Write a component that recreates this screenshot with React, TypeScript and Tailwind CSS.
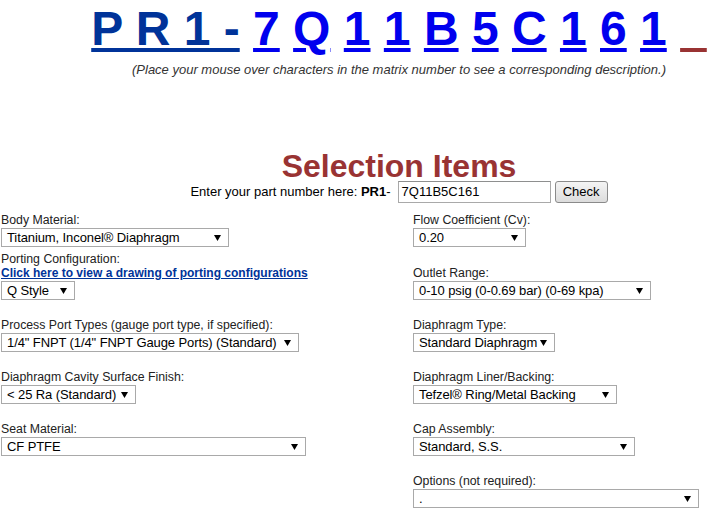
import React from "react";

function Arrow() {
  return (
    <svg width="7" height="6" viewBox="0 0 7 6" className="shrink-0 ml-[3px]">
      <polygon points="0,0 7,0 3.5,6" fill="#000" />
    </svg>
  );
}

function Sel({ value, w }: { value: string; w: string }) {
  return (
    <div
      className={`flex h-[19px] mt-[1px] items-center justify-between border border-[#a9a9a9] bg-white pl-[5px] pr-[7px] text-[13px] leading-[15px] text-black whitespace-nowrap ${w}`}
    >
      <span className="tracking-[-0.1px]">{value}</span>
      <Arrow />
    </div>
  );
}

function Label({ children }: { children: React.ReactNode }) {
  return <div className="text-[12.3px] leading-[14px] text-[#222] whitespace-nowrap">{children}</div>;
}

const chars = ["7", "Q", "1", "1", "B", "5", "C", "1", "6", "1"];

export default function App() {
  return (
    <div className="w-[713px] h-[519px] overflow-hidden bg-white font-['Liberation_Sans',Arial,sans-serif] text-black">
      <div className="pl-[85px] text-center pt-[2px]">
        <div className="text-[48px] font-bold leading-[53px] whitespace-nowrap">
          <a className="text-[#003399] underline">P R 1 -</a>{" "}
          {chars.map((c, i) => (
            <React.Fragment key={i}>
              <a className="text-[#0000ee] underline">{c}</a>{" "}
            </React.Fragment>
          ))}
          <span className="text-[#993333] underline">{"\u00a0\u00a0"}</span>
        </div>
        <div className="italic text-[13px] leading-[15px] text-[#333] mt-[7px]">
          (Place your mouse over characters in the matrix number to see a corresponding description.)
        </div>
        <div className="mt-[75px] text-[32px] leading-[29px] font-bold text-[#993333]">Selection Items</div>
        <div className="flex justify-center items-center h-[22px] text-[13px] text-black">
          <span>
            Enter your part number here: <b>PR1</b>-
          </span>
          <div className="ml-[7px] w-[153px] h-[22px] border border-[#a9a9a9] border-t-[#8e8f8f] flex items-center pl-[3px] text-left">
            7Q11B5C161
          </div>
          <div className="ml-[4px] w-[53px] h-[22px] rounded-[3px] border border-[#8a8a8a] bg-gradient-to-b from-[#f4f4f4] to-[#dcdcdc] flex items-center justify-center">
            Check
          </div>
        </div>
      </div>

      <div className="mt-[10px] flex flex-col">
        <div className="grid grid-cols-[413px_1fr] items-end">
          <div className="pl-[1px]">
            <Label>Body Material:</Label>
            <Sel value="Titanium, Inconel® Diaphragm" w="w-[228px]" />
          </div>
          <div>
            <Label>Flow Coefficient (Cv):</Label>
            <Sel value="0.20" w="w-[113px]" />
          </div>
        </div>

        <div className="grid grid-cols-[413px_1fr] items-end mt-[5px]">
          <div className="pl-[1px]">
            <Label>Porting Configuration:</Label>
            <a className="block text-[12px] leading-[14px] font-bold underline text-[#003399] whitespace-nowrap">
              Click here to view a drawing of porting configurations
            </a>
            <div className="mt-[1px]">
              <Sel value="Q Style" w="w-[74px]" />
            </div>
          </div>
          <div>
            <Label>Outlet Range:</Label>
            <div className="mt-[1px]">
              <Sel value="0-10 psig (0-0.69 bar) (0-69 kpa)" w="w-[238px]" />
            </div>
          </div>
        </div>

        <div className="grid grid-cols-[413px_1fr] items-end mt-[18px]">
          <div className="pl-[1px]">
            <Label>Process Port Types (gauge port type, if specified):</Label>
            <Sel value={'1/4" FNPT (1/4" FNPT Gauge Ports) (Standard)'} w="w-[298px]" />
          </div>
          <div>
            <Label>Diaphragm Type:</Label>
            <Sel value="Standard Diaphragm" w="w-[142px]" />
          </div>
        </div>

        <div className="grid grid-cols-[413px_1fr] items-end mt-[18px]">
          <div className="pl-[1px]">
            <Label>Diaphragm Cavity Surface Finish:</Label>
            <Sel value="< 25 Ra (Standard)" w="w-[135px]" />
          </div>
          <div>
            <Label>Diaphragm Liner/Backing:</Label>
            <Sel value="Tefzel® Ring/Metal Backing" w="w-[204px]" />
          </div>
        </div>

        <div className="grid grid-cols-[413px_1fr] items-end mt-[18px]">
          <div className="pl-[1px]">
            <Label>Seat Material:</Label>
            <Sel value="CF PTFE" w="w-[305px]" />
          </div>
          <div>
            <Label>Cap Assembly:</Label>
            <Sel value="Standard, S.S." w="w-[222px]" />
          </div>
        </div>

        <div className="grid grid-cols-[413px_1fr] items-end mt-[18px]">
          <div />
          <div>
            <Label>Options (not required):</Label>
            <Sel value="." w="w-[286px]" />
          </div>
        </div>
      </div>
    </div>
  );
}
